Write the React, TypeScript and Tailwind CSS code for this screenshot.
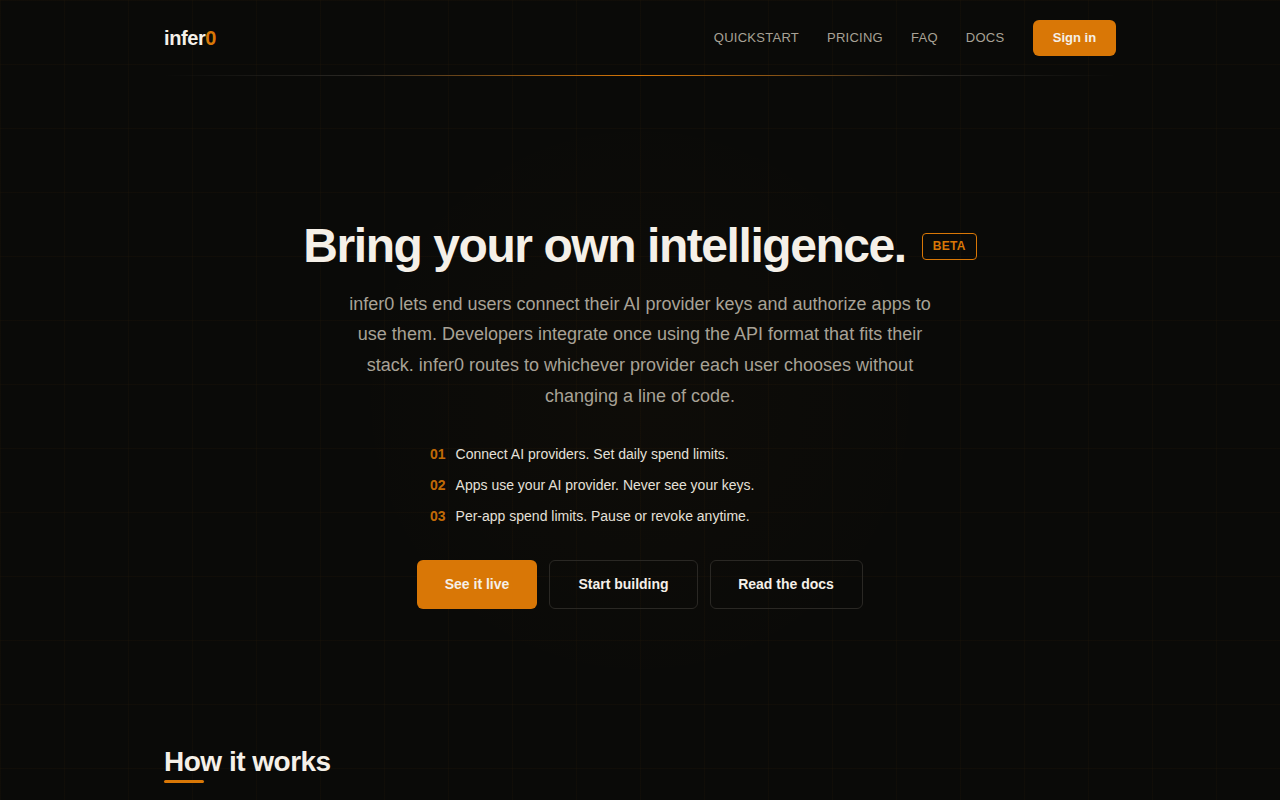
import React from 'react';

const navLinks = ['QUICKSTART', 'PRICING', 'FAQ', 'DOCS'];

const steps = [
  { num: '01', text: 'Connect AI providers. Set daily spend limits.' },
  { num: '02', text: 'Apps use your AI provider. Never see your keys.' },
  { num: '03', text: 'Per-app spend limits. Pause or revoke anytime.' },
];

const App: React.FC = () => {
  return (
    <div className="h-screen overflow-hidden bg-[#0a0a08] bg-[radial-gradient(circle_at_50%_50%,rgba(217,119,6,0.018),transparent_300px),linear-gradient(rgba(217,119,6,0.03)_1px,transparent_1px),linear-gradient(90deg,rgba(217,119,6,0.03)_1px,transparent_1px)] bg-[size:100%_100%,64px_64px,64px_64px] font-['Liberation_Sans',Arial,sans-serif] text-[#f5f0e8]">
      <div className="mx-auto w-[952px]">
        <header className="flex h-[75px] items-center justify-between">
          <div className="text-xl font-bold tracking-[-0.4px]">
            infer<span className="text-[#d97706]">0</span>
          </div>
          <nav className="flex items-center gap-7">
            {navLinks.map((link) => (
              <a key={link} className="text-[13px] tracking-[0.26px] text-[#a8a296]">
                {link}
              </a>
            ))}
            <button className="ml-[0.6px] h-9 w-[83px] rounded-md bg-[#d97706] text-[13px] font-bold text-[#f5f0e8]">
              Sign in
            </button>
          </nav>
        </header>
      </div>
      <div className="mx-auto h-px w-[952px] bg-[linear-gradient(90deg,transparent,#2a2824_20%,#d97706_50%,#2a2824_80%,transparent)]" />

      <main className="mx-auto w-[952px]">
        <section className="flex flex-col items-center pt-[139px]">
          <div className="flex items-center gap-4">
            <h1 className="text-5xl leading-[62px] font-bold tracking-[-1.44px]">Bring your own intelligence.</h1>
            <span className="flex h-[27px] items-center rounded border border-[#d97706] px-2.5 text-xs font-bold tracking-[0.3px] text-[#d97706]">
              BETA
            </span>
          </div>
          <p className="mt-[11.8px] w-[600px] text-center text-lg leading-[30.6px] text-[#a8a296]">
            infer0 lets end users connect their AI provider keys and authorize apps to use them. Developers integrate once using the API format that fits their stack. infer0 routes to whichever provider each user chooses without changing a line of code.
          </p>
          <ul className="mt-[32.2px] flex w-[420px] flex-col gap-[10px]">
            {steps.map((step) => (
              <li key={step.num} className="flex h-[21px] items-center gap-[10px] text-sm text-[#e5e0d8]">
                <span className="font-bold text-[#d97706]/90">{step.num}</span>
                <span>{step.text}</span>
              </li>
            ))}
          </ul>
          <div className="mt-[34px] flex gap-3">
            <button className="h-[49px] w-[120px] rounded-md bg-[#d97706] pb-px text-sm font-bold text-[#f5f0e8]">See it live</button>
            <button className="h-[49px] w-[149px] rounded-md border border-[#2a2824] pb-px text-sm font-bold text-[#f5f0e8]">Start building</button>
            <button className="h-[49px] w-[153px] rounded-md border border-[#2a2824] pb-px pr-px text-sm font-bold text-[#f5f0e8]">Read the docs</button>
          </div>
        </section>

        <section className="pt-[136px]">
          <h2 className="text-[28px] leading-[34px] font-bold tracking-[-0.5px]">How it works</h2>
          <div className="mt-px h-[3px] w-10 rounded-sm bg-[#d97706]" />
        </section>
      </main>
    </div>
  );
};

export default App;
